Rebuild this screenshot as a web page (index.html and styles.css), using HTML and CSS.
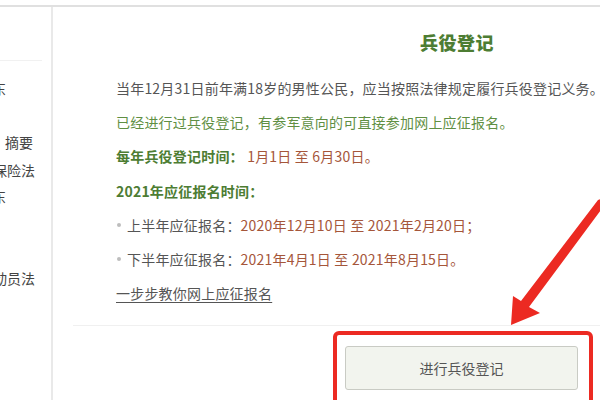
FILE: index.html
```html
<!DOCTYPE html>
<html lang="zh-CN">
<head>
<meta charset="utf-8">
<title>兵役登记</title>
<link rel="stylesheet" href="styles.css">
</head>
<body>
<div class="page">
  <aside class="sidebar">
    <div class="side-rule"></div>
    <div class="side-item s1"><span class="shift-a">结东</span></div>
    <div class="side-item s2"><span class="shift-b">摘要</span></div>
    <div class="side-item s3"><span class="shift-c">保险法</span></div>
    <div class="side-item s4"><span class="shift-a">结东</span></div>
    <div class="side-item s5"><span class="shift-c">动员法</span></div>
  </aside>
  <main class="main">
    <h1 class="title">兵役登记</h1>
    <div class="lines">
      <p class="line">当年12月31日前年满18岁的男性公民，应当按照法律规定履行兵役登记义务。</p>
      <p class="line green">已经进行过兵役登记，有参军意向的可直接参加网上应征报名。</p>
      <p class="line"><b class="label">每年兵役登记时间：</b> <span class="date">1月1日 至 6月30日。</span></p>
      <p class="line"><b class="label">2021年应征报名时间：</b></p>
      <p class="line bullet">上半年应征报名：<span class="date">2020年12月10日 至 2021年2月20日；</span></p>
      <p class="line bullet">下半年应征报名：<span class="date">2021年4月1日 至 2021年8月15日。</span></p>
      <p class="line"><a class="link" href="#">一步步教你网上应征报名</a></p>
    </div>
    <div class="divider"></div>
    <button class="btn" type="button">进行兵役登记</button>
  </main>
  <svg class="annot" width="600" height="400" viewBox="0 0 600 400" aria-hidden="true">
    <polygon points="511,325 513,296 521,301 598,200 601,199 601,210 529,307 540,313" fill="#ec2a22"/>
    <rect x="335" y="333" width="256" height="80" rx="4" ry="4" fill="none" stroke="#ec2a22" stroke-width="4"/>
  </svg>
</div>
</body>
</html>
```

FILE: styles.css
```css
html, body {
  margin: 0;
  padding: 0;
  background: #fff;
}
body {
  width: 600px;
  height: 400px;
  overflow: hidden;
  font-family: "Noto Sans CJK SC", "Noto Sans", sans-serif;
  color: #555;
}
.page {
  position: relative;
  margin-top: 5px;
  border-top: 2px solid #e0e0e0;
  display: flex;
  height: 393px;
}
.sidebar {
  width: 51px;
  flex: none;
  border-right: 2px solid #e9e9e9;
  overflow: hidden;
  font-size: 14px;
  color: #444;
}
.side-rule {
  margin-top: 53px;
  width: 42px;
  border-top: 1px solid #f1f1f1;
}
.side-item {
  line-height: 20px;
  white-space: nowrap;
}
.s1 { margin-top: 17px; }
.s2 { margin-top: 34px; }
.s3 { margin-top: 8px; }
.s4 { margin-top: 6px; }
.s5 { margin-top: 62px; }
.shift-a { margin-left: -22px; }
.shift-b { margin-left: 5px; }
.shift-c { margin-left: -7px; }
.main {
  flex: 1;
  padding-top: 23px;
}
.title {
  margin: 0 0 0 367px;
  font-size: 18px;
  line-height: 24px;
  font-weight: 900;
  color: #4d7d33;
  letter-spacing: 0.5px;
}
.lines {
  margin: 24px 0 0 63px;
  display: flex;
  flex-direction: column;
  gap: 14.2px;
}
.line {
  margin: 0;
  font-size: 14px;
  line-height: 20px;
  white-space: nowrap;
  letter-spacing: 0.2px;
}
.green { color: #5f8f43; }
.label { color: #4d7d33; font-weight: bold; }
.date { color: #a5563a; }
.bullet {
  position: relative;
  padding-left: 11px;
}
.bullet::before {
  content: "";
  position: absolute;
  left: 1px;
  top: 8px;
  width: 4px;
  height: 4px;
  border-radius: 50%;
  background: #bdbdbd;
}
.link {
  color: #555;
  text-decoration: underline;
  text-underline-offset: 3px;
}
.divider {
  margin: 22px 0 0 20px;
  border-top: 1px solid #f0f0f0;
}
.btn {
  display: block;
  margin: 20px 0 0 292px;
  width: 233px;
  height: 44px;
  border: 1px solid #c9cbc4;
  border-radius: 3px;
  background: #f2f4ee;
  font-family: "Noto Sans CJK SC", sans-serif;
  font-size: 14px;
  color: #555;
  padding: 0;
}
.annot {
  position: absolute;
  left: 0;
  top: -7px;
  pointer-events: none;
}
```
